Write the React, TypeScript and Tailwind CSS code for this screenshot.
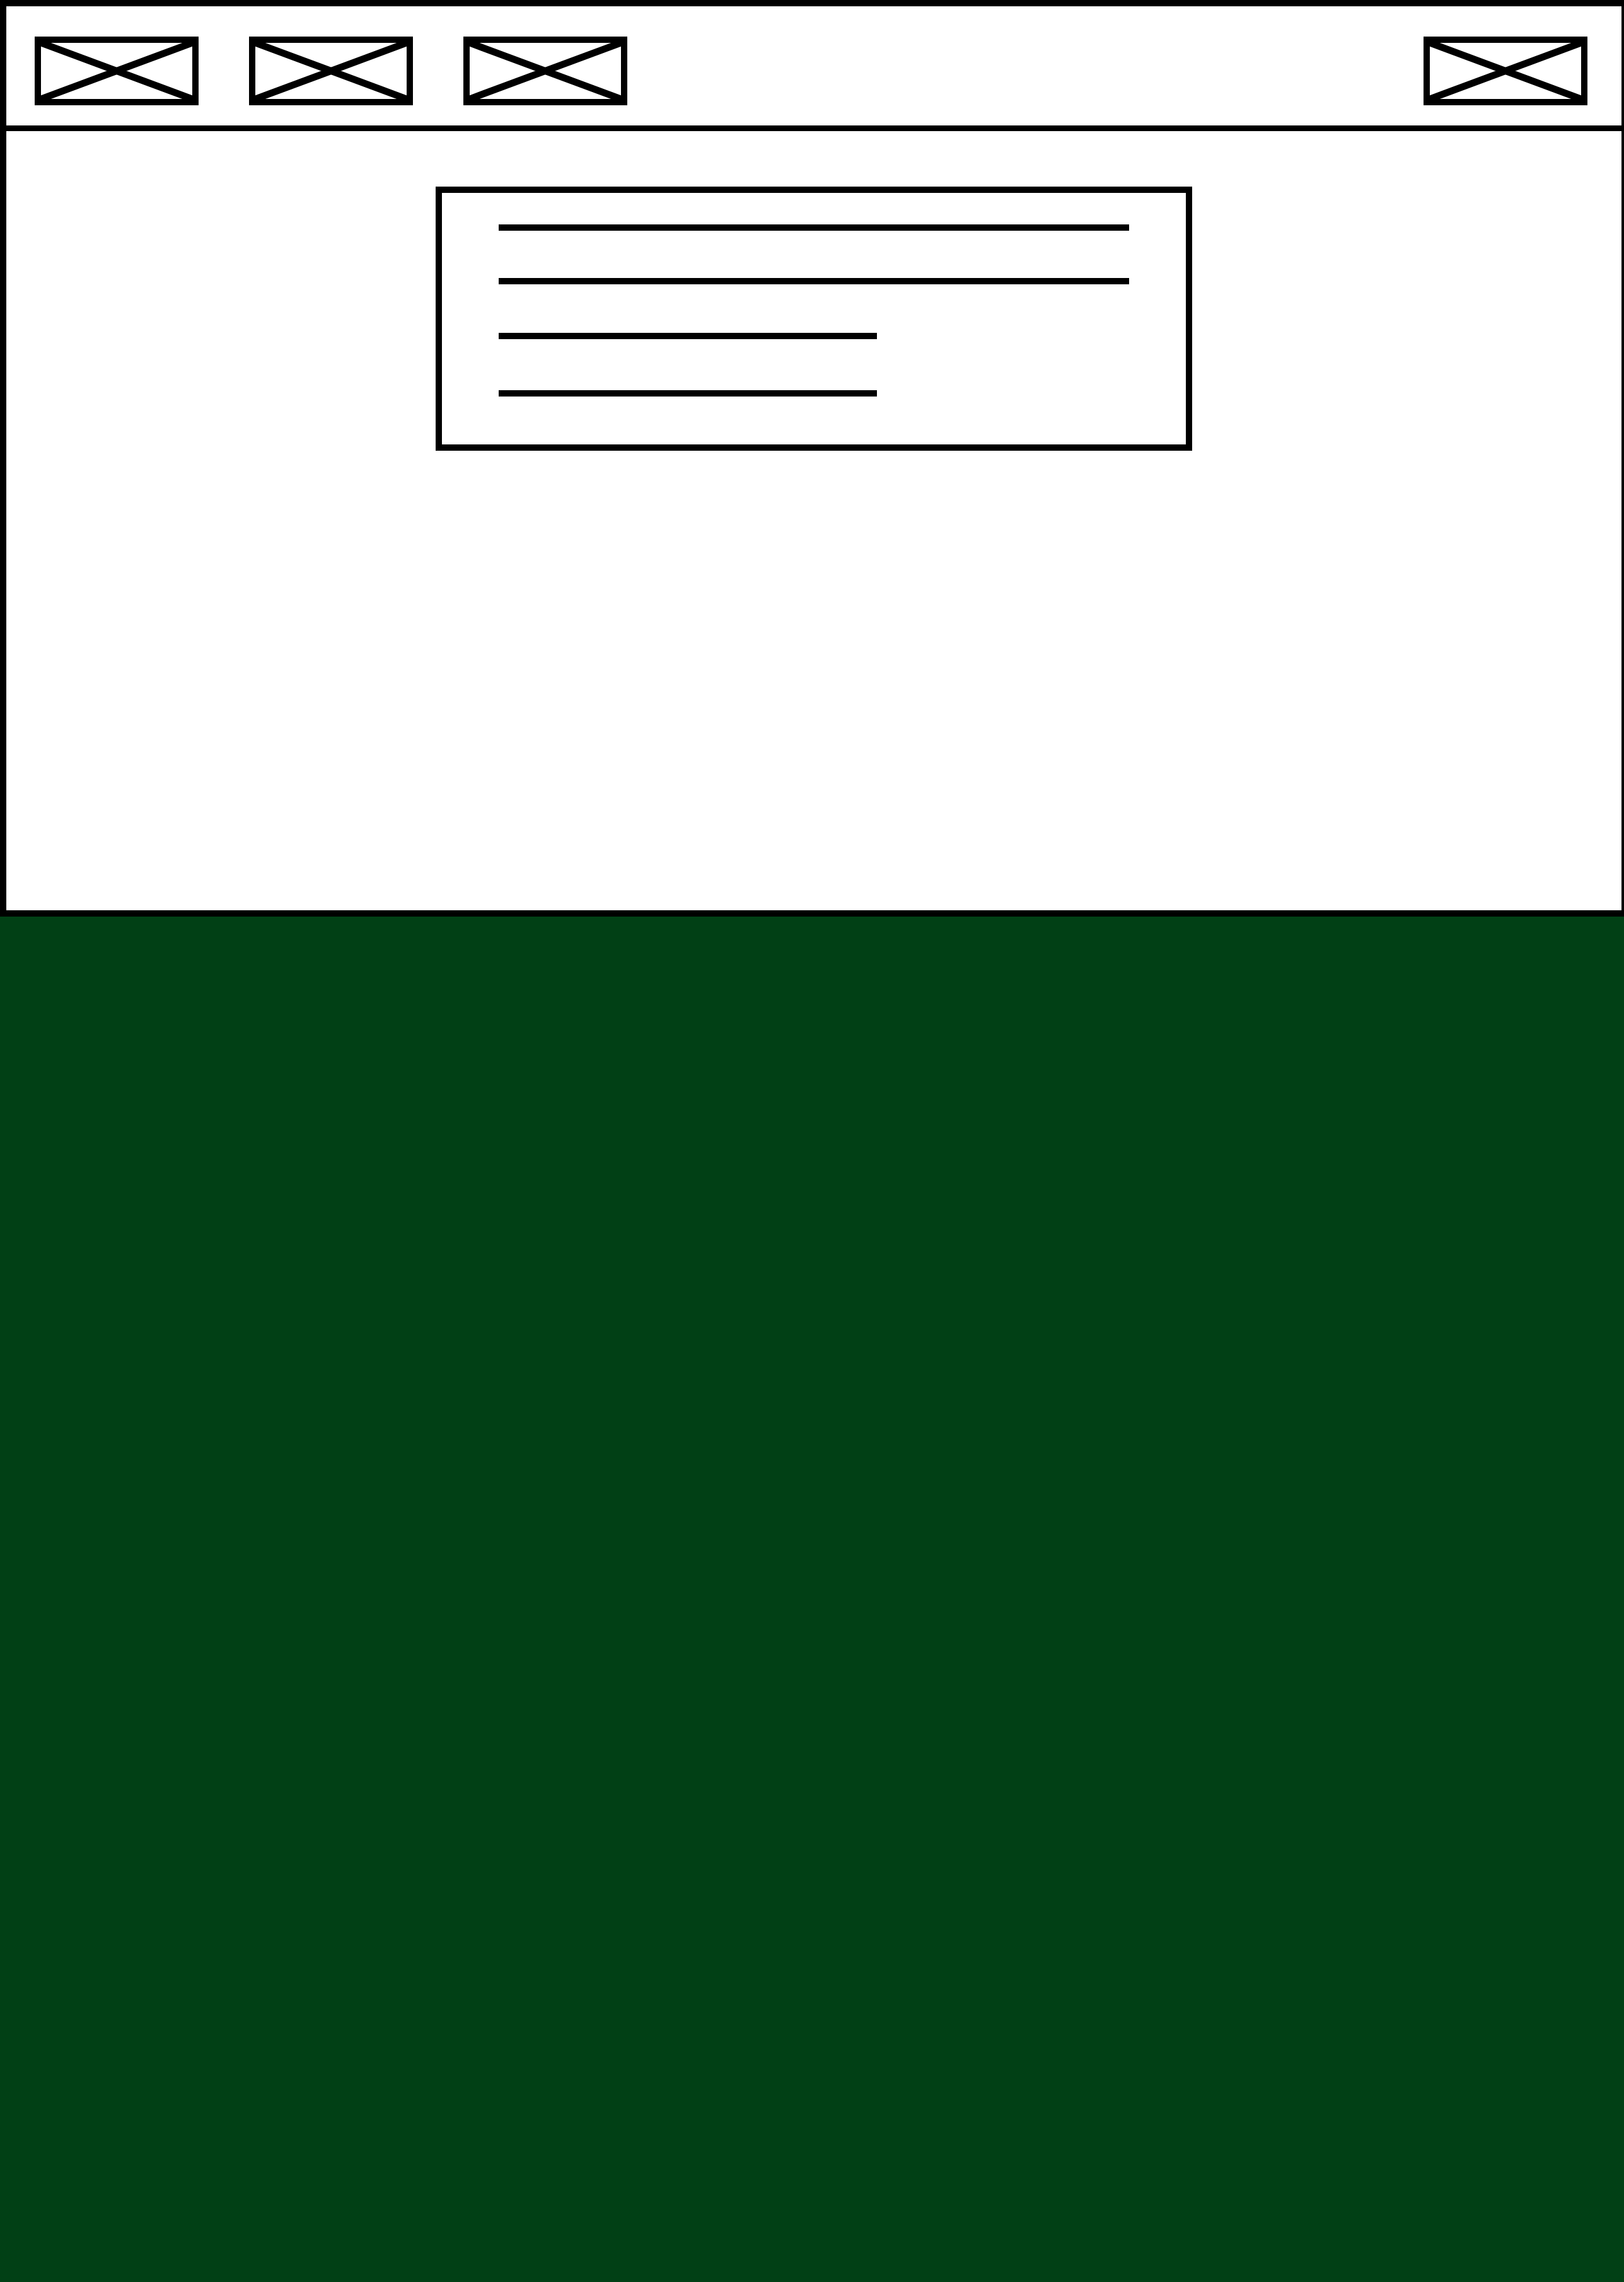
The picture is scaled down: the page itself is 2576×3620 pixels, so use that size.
import React from 'react';

// placeholder image box: a frame with two crossing diagonals
const ImageSlot: React.FC = () => (
    <div className="w-[260px] h-[109px] border-[10px] border-black bg-white">
        <svg viewBox="0 0 240 89" preserveAspectRatio="none" className="block w-full h-full">
            <line x1="0" y1="0" x2="240" y2="89" stroke="#000" strokeWidth="11" />
            <line x1="240" y1="0" x2="0" y2="89" stroke="#000" strokeWidth="11" />
        </svg>
    </div>
);

const TextLine: React.FC<{ width: string; gap: string }> = ({ width, gap }) => (
    <div className={`h-[10px] bg-black ${width} ${gap}`} />
);

export default function App() {
    return (
        <div className="w-full min-h-[3620px] bg-[#014015]">
            <div className="border-t-[10px] border-l-[10px] border-r-[4px] border-b-[10px] border-black bg-white">
                {/* Header */}
                <header className="h-[198px] border-b-[9px] border-black flex items-start justify-between pt-[48px] pl-[45px] pr-[54px]">
                    <div className="flex gap-[80px]">
                        <ImageSlot />
                        <ImageSlot />
                        <ImageSlot />
                    </div>
                    <ImageSlot />
                </header>

                {/* Body */}
                <main className="h-[1236px] pt-[88px]">
                    <div className="mx-auto w-[1200px] h-[419px] border-[10px] border-black pl-[90px] pt-[50px]">
                        <TextLine width="w-[1000px]" gap="mt-0" />
                        <TextLine width="w-[1000px]" gap="mt-[75px]" />
                        <TextLine width="w-[600px]" gap="mt-[77px]" />
                        <TextLine width="w-[600px]" gap="mt-[81px]" />
                    </div>
                </main>
            </div>
        </div>
    );
}
